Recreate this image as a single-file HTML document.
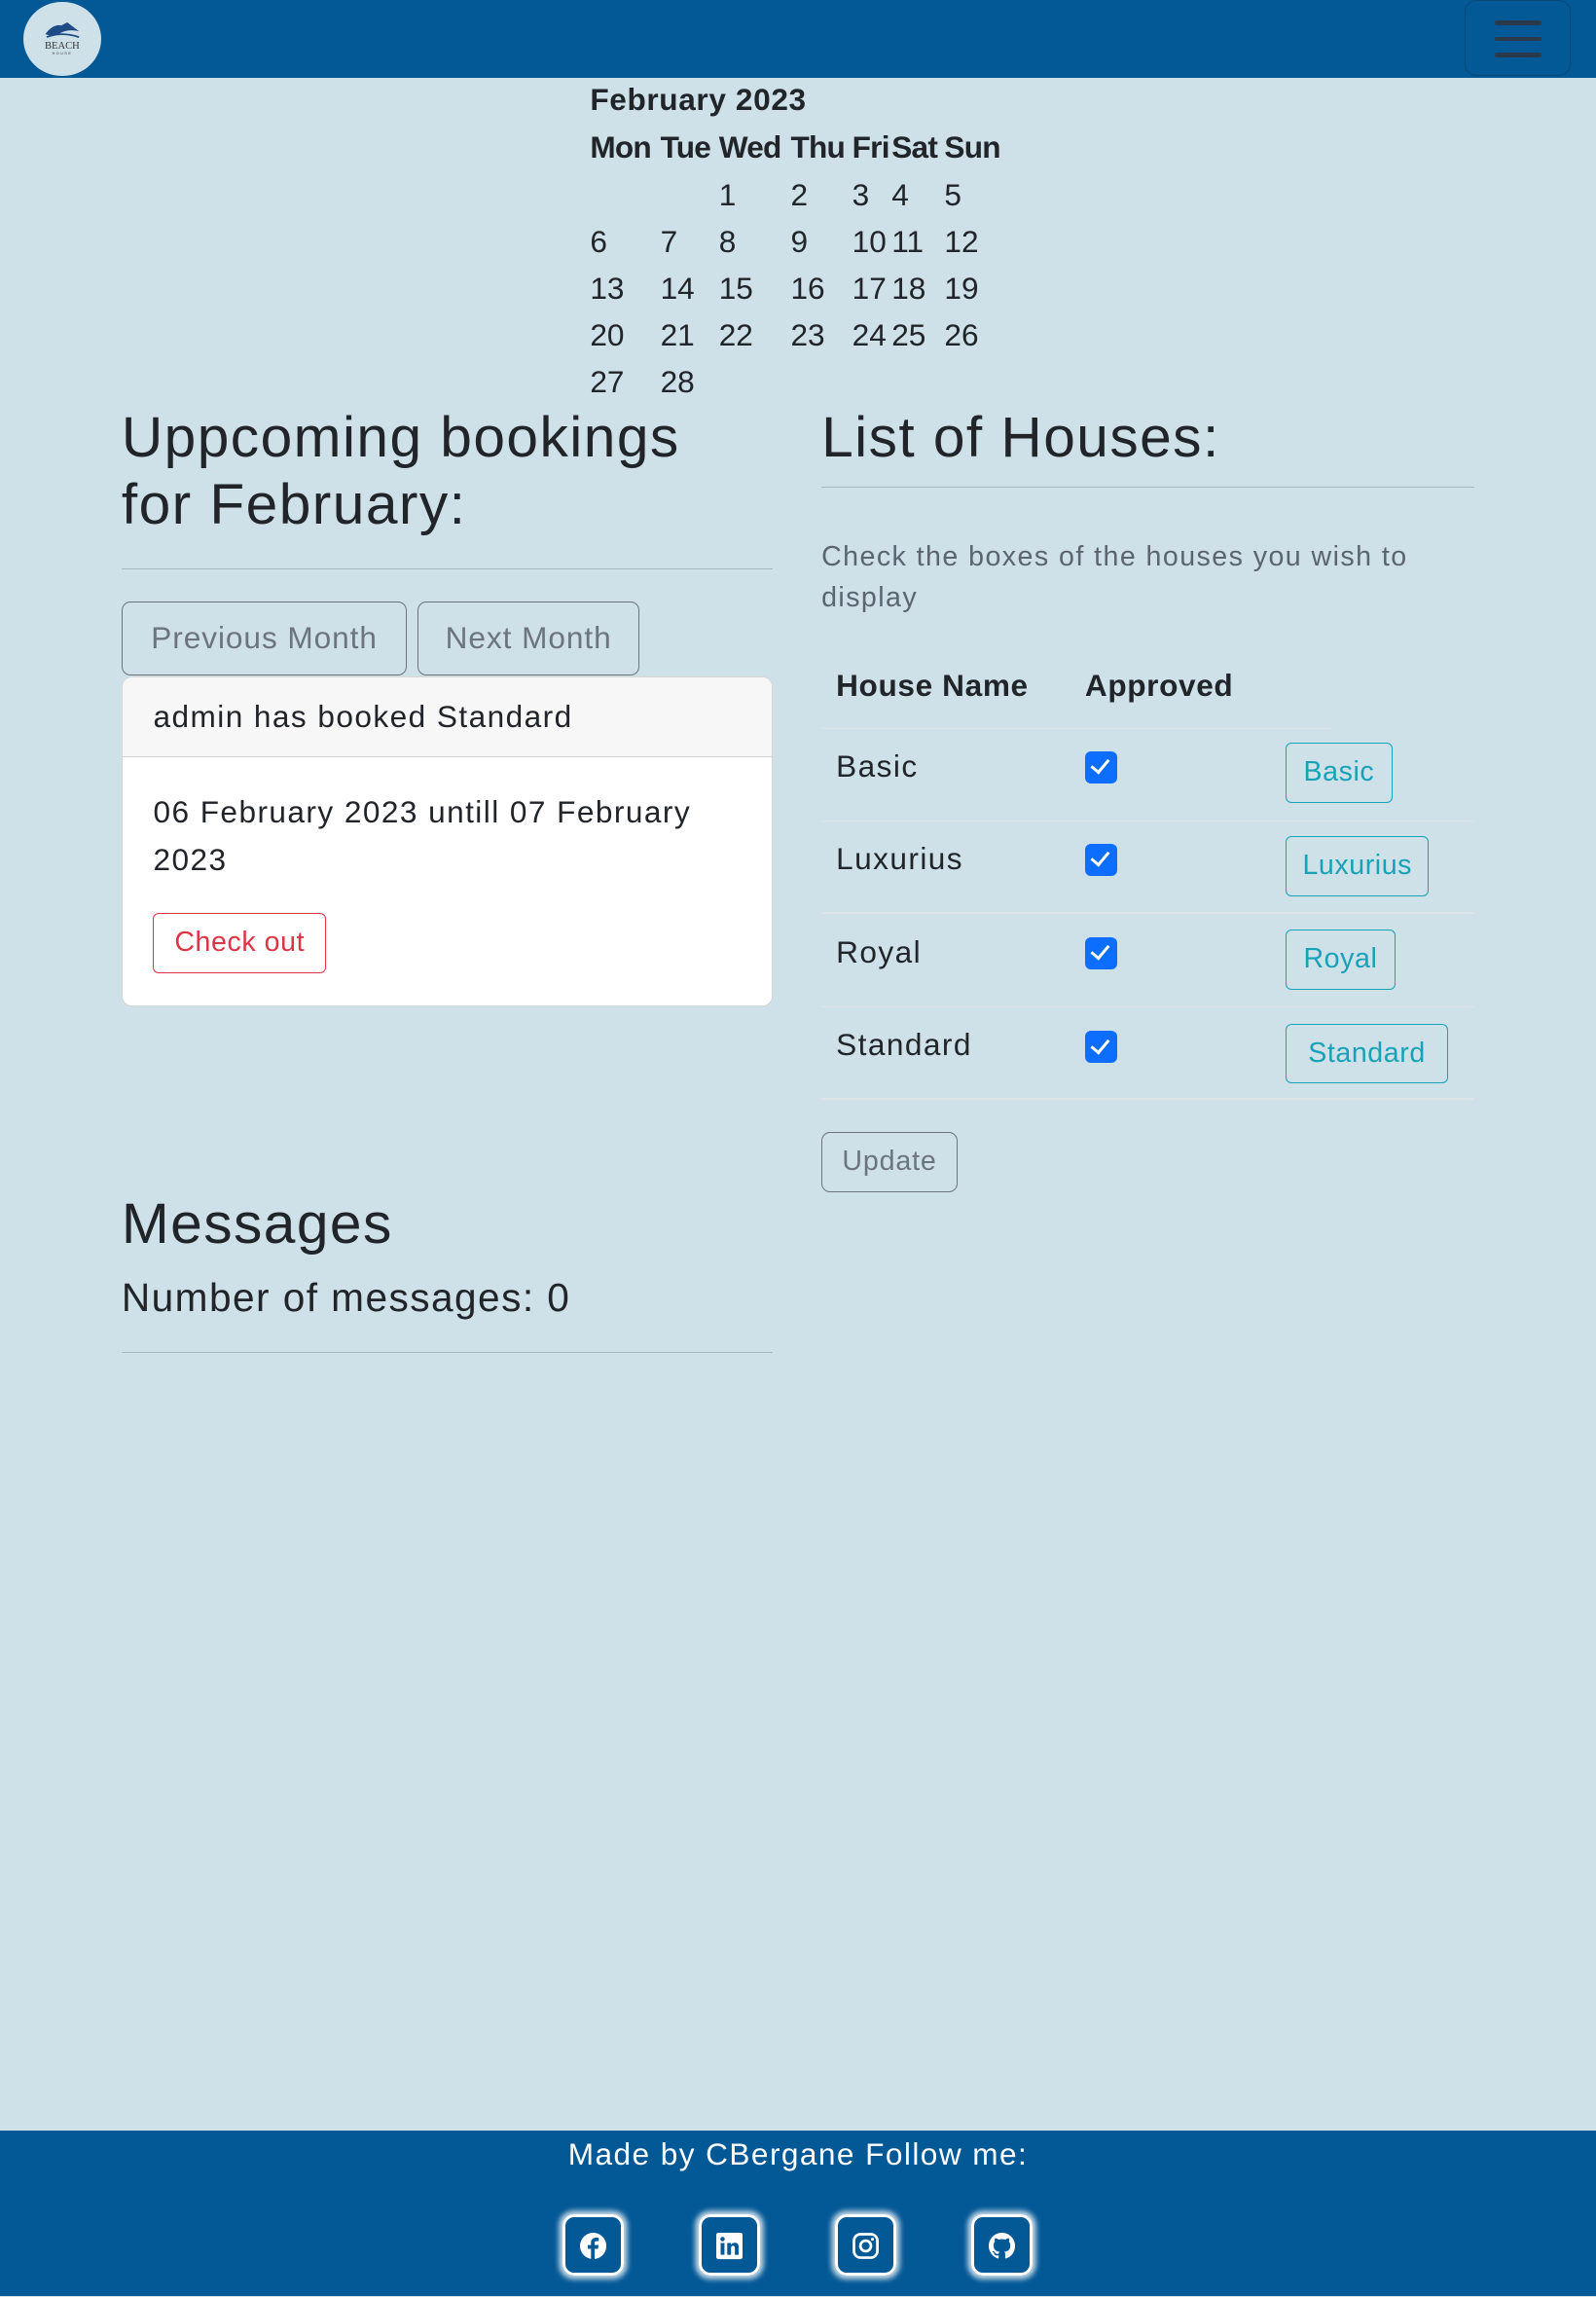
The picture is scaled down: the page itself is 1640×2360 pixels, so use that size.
<!DOCTYPE html>
<html><head><meta charset="utf-8">
<style>
html,body{margin:0;padding:0;background:#cee0e8;}
body{width:1640px;height:2360px;overflow:hidden;font-family:"Liberation Sans",sans-serif;color:#212529;}
#w{width:1090px;height:1568px;position:relative;zoom:1.50459;letter-spacing:0.06em;}
.a{position:absolute;white-space:nowrap;}
.nav{position:absolute;left:0;top:0;width:1090px;height:53px;background:#035896;}
.logo{position:absolute;left:16px;top:1px;width:53px;height:51px;border-radius:50%;background:#cee0e8;}
.tog{position:absolute;left:1000px;top:0;width:73px;height:52px;border:1px solid #0b4a78;border-radius:8px;box-sizing:border-box;}
.hl{position:absolute;left:1021px;width:32px;height:3px;background:#2b3a4a;border-radius:2px;}
table.cal{position:absolute;left:403px;top:85px;border-collapse:collapse;font-size:21px;letter-spacing:0;}
table.cal td{padding:0;height:32px;vertical-align:middle;}
.hr{position:absolute;height:1px;background:#a8b6bd;}
.btn{position:absolute;border:1px solid #6c757d;border-radius:6px;box-sizing:border-box;color:#6c757d;font-size:21px;text-align:center;letter-spacing:0.03em;}
.card{position:absolute;left:83px;top:462px;width:445px;height:225px;background:#fff;border:1px solid #d6d6d6;border-radius:7px;box-sizing:border-box;overflow:hidden;}
.tb{position:absolute;border:1px solid #17a2b8;border-radius:4px;color:#17a2b8;font-size:19px;box-sizing:border-box;text-align:center;letter-spacing:0.02em;}
.cb{position:absolute;left:741px;width:22px;height:22px;border-radius:4px;background:#0d6efd;}
.cb::after{content:"";position:absolute;left:7px;top:3px;width:5px;height:10px;border:solid #fff;border-width:0 2.5px 2.5px 0;transform:rotate(40deg);}
.row{position:absolute;left:561px;width:446px;height:1px;background:#dde3e6;}
.foot{position:absolute;left:0;top:1455px;width:1090px;height:113px;background:#035896;}
.ic{position:absolute;top:1512px;width:42px;height:42px;border:2px solid #fff;border-radius:8px;box-sizing:border-box;box-shadow:0 0 4px 2px rgba(255,255,255,.8);}
.ic svg{position:absolute;left:10px;top:11px;}
</style></head><body><div id="w">
<div class="nav">
 <div class="logo">
  <svg width="53" height="51" viewBox="0 0 53 51"><path d="M15 22 Q20 15 26 16 L30 14 L38 20 Q30 18 24 22 Q20 24 15 22Z" fill="#1e4a85"/><path d="M16 24 Q26 20 38 24" stroke="#1e4a85" stroke-width="1.2" fill="none"/>
  <text x="26.5" y="32" font-size="7" text-anchor="middle" font-family="Liberation Serif" fill="#333" letter-spacing="0">BEACH</text>
  <text x="26.5" y="36" font-size="2.5" text-anchor="middle" fill="#333">HOUSE</text></svg>
 </div>
 <div class="tog"></div>
 <div class="hl" style="top:14px"></div>
 <div class="hl" style="top:25px"></div>
 <div class="hl" style="top:36px"></div>
</div>

<div class="a" style="left:403px;top:56px;font-size:21px;font-weight:bold;letter-spacing:0.02em;">February 2023</div>
<table class="cal">
<colgroup><col style="width:48px"><col style="width:40px"><col style="width:49px"><col style="width:42px"><col style="width:27px"><col style="width:36px"><col style="width:45px"></colgroup>
<tr style="font-weight:bold;letter-spacing:-0.5px"><td>Mon</td><td>Tue</td><td>Wed</td><td>Thu</td><td>Fri</td><td>Sat</td><td>Sun</td></tr>
<tr><td></td><td></td><td>1</td><td>2</td><td>3</td><td>4</td><td>5</td></tr>
<tr><td>6</td><td>7</td><td>8</td><td>9</td><td>10</td><td>11</td><td>12</td></tr>
<tr><td>13</td><td>14</td><td>15</td><td>16</td><td>17</td><td>18</td><td>19</td></tr>
<tr><td>20</td><td>21</td><td>22</td><td>23</td><td>24</td><td>25</td><td>26</td></tr>
<tr><td>27</td><td>28</td><td></td><td></td><td></td><td></td><td></td></tr>
</table>

<div class="a" style="left:83px;top:276px;font-size:39px;line-height:46px;">Uppcoming bookings<br>for February:</div>
<div class="hr" style="left:83px;top:388px;width:445px;"></div>
<div class="btn" style="left:83px;top:411px;width:195px;height:50px;line-height:48px;">Previous Month</div>
<div class="btn" style="left:285px;top:411px;width:152px;height:50px;line-height:48px;">Next Month</div>
<div class="card">
 <div style="height:54px;background:#f7f7f7;border-bottom:1px solid #d0d0d0;font-size:21px;line-height:54px;padding-left:21px;">admin has booked Standard</div>
 <div style="position:absolute;left:21px;top:76px;font-size:21px;line-height:32px;white-space:nowrap;">06 February 2023 untill 07 February<br>2023</div>
 <div style="position:absolute;left:21px;top:161px;width:118px;height:41px;border:1px solid #dc3545;border-radius:4px;box-sizing:border-box;color:#dc3545;font-size:19px;line-height:39px;text-align:center;letter-spacing:0.02em;">Check out</div>
</div>

<div class="a" style="left:83px;top:813px;font-size:39px;line-height:46px;">Messages</div>
<div class="a" style="left:83px;top:868px;font-size:27px;line-height:36px;">Number of messages: 0</div>
<div class="hr" style="left:83px;top:923px;width:445px;"></div>

<div class="a" style="left:561px;top:276px;font-size:39px;line-height:46px;">List of Houses:</div>
<div class="hr" style="left:561px;top:332px;width:446px;"></div>
<div class="a" style="left:561px;top:366px;font-size:19px;line-height:28px;color:#5a6570;">Check the boxes of the houses you wish to<br>display</div>
<div class="a" style="left:571px;top:456px;font-size:21px;font-weight:bold;letter-spacing:0.02em;">House Name</div>
<div class="a" style="left:741px;top:456px;font-size:21px;font-weight:bold;letter-spacing:0.02em;">Approved</div>
<div class="row" style="top:497px;width:348px;"></div>

<div class="a" style="left:571px;top:511px;font-size:21px;">Basic</div>
<div class="cb" style="top:513px;"></div>
<div class="tb" style="left:878px;top:507px;width:73px;height:41px;line-height:39px;">Basic</div>
<div class="row" style="top:560px;"></div>

<div class="a" style="left:571px;top:574px;font-size:21px;">Luxurius</div>
<div class="cb" style="top:576px;"></div>
<div class="tb" style="left:878px;top:571px;width:98px;height:41px;line-height:39px;">Luxurius</div>
<div class="row" style="top:623px;"></div>

<div class="a" style="left:571px;top:638px;font-size:21px;">Royal</div>
<div class="cb" style="top:640px;"></div>
<div class="tb" style="left:878px;top:635px;width:75px;height:41px;line-height:39px;">Royal</div>
<div class="row" style="top:687px;"></div>

<div class="a" style="left:571px;top:701px;font-size:21px;">Standard</div>
<div class="cb" style="top:704px;"></div>
<div class="tb" style="left:878px;top:699px;width:111px;height:41px;line-height:39px;">Standard</div>
<div class="row" style="top:750px;"></div>

<div class="btn" style="left:561px;top:773px;width:93px;height:41px;line-height:39px;font-size:19px;">Update</div>

<div class="foot"></div>
<div class="a" style="left:0;width:1090px;text-align:center;top:1457px;font-size:21px;line-height:28px;color:#fff;">Made by CBergane Follow me:</div>
<div class="ic" style="left:384px;"><svg width="18" height="18" viewBox="0 0 18 18"><circle cx="9" cy="9" r="9" fill="#fff"/><path d="M10 18V11h2.3l.4-2.6H10V7c0-.8.3-1.3 1.4-1.3h1.4V3.4c-.3 0-1.1-.1-2-.1-2 0-3.300 1.2-3.300 3.4v1.7H5.3V11h2.2v7z" fill="#035896"/></svg></div>
<div class="ic" style="left:477px;"><svg width="18" height="18" viewBox="0 0 18 18"><rect width="18" height="18" rx="1.5" fill="#fff"/><rect x="3" y="7" width="2.6" height="8" fill="#035896"/><circle cx="4.3" cy="4.3" r="1.5" fill="#035896"/><path d="M7.5 7h2.5v1.2c.5-.9 1.5-1.4 2.7-1.4 2 0 2.6 1.3 2.6 3.2V15h-2.6v-4.5c0-1-.3-1.6-1.2-1.6-1 0-1.4.7-1.4 1.600V15H7.5z" fill="#035896"/></svg></div>
<div class="ic" style="left:570px;"><svg width="18" height="18" viewBox="0 0 18 18"><rect x="1" y="1" width="16" height="16" rx="4.5" fill="none" stroke="#fff" stroke-width="1.8"/><circle cx="9" cy="9" r="3.6" fill="none" stroke="#fff" stroke-width="1.8"/><circle cx="13.6" cy="4.4" r="1" fill="#fff"/></svg></div>
<div class="ic" style="left:663px;"><svg width="18" height="18" viewBox="0 0 16 16"><path fill="#fff" d="M8 0C3.58 0 0 3.58 0 8c0 3.540 2.29 6.53 5.47 7.59.4.07.55-.17.55-.38 0-.19-.01-.82-.01-1.49-2.01.37-2.53-.49-2.69-.94-.09-.23-.48-.94-.82-1.13-.28-.15-.68-.52-.01-.53.63-.01 1.08.58 1.23.82.72 1.21 1.87.87 2.33.66.07-.52.28-.87.51-1.07-1.78-.2-3.640-.89-3.640-3.950 0-.87.31-1.590.82-2.150-.08-.2-.36-1.020.08-2.120 0 0 .67-.21 2.2.82.64-.18 1.32-.27 2-.27.68 0 1.36.09 2 .27 1.53-1.04 2.2-.82 2.2-.82.44 1.1.16 1.92.08 2.12.51.56.82 1.27.82 2.15 0 3.07-1.87 3.75-3.65 3.95.29.25.54.73.54 1.48 0 1.07-.01 1.93-.01 2.2 0 .21.15.46.55.38A8.013 8.013 0 0016 8c0-4.42-3.58-8-8-8z"/></svg></div>
</div>
</body></html>
